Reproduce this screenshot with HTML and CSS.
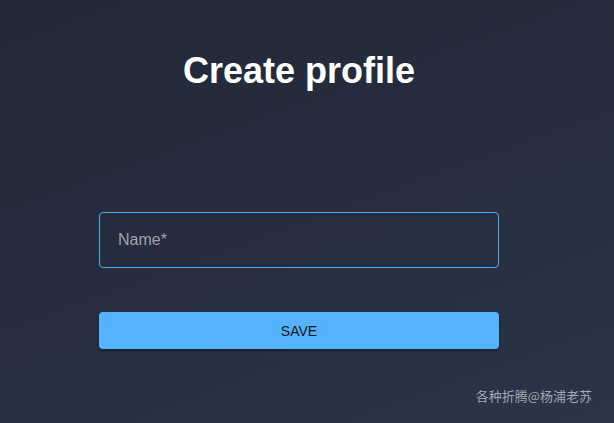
FILE: index.html
```html
<!DOCTYPE html>
<html lang="en">
<head>
<meta charset="utf-8">
<title>Create profile</title>
<link rel="stylesheet" href="styles.css">
</head>
<body>
<main class="page">
  <h1 class="title">Create profile</h1>
  <form class="form">
    <label class="field">
      <span class="field-label">Name*</span>
    </label>
    <button type="button" class="save">SAVE</button>
  </form>
</main>
<div class="watermark">各种折腾@杨浦老苏</div>
</body>
</html>
```
FILE: styles.css
```css
html, body {
  margin: 0;
  height: 100%;
}
body {
  background: linear-gradient(160deg, #222939 0%, #252d3e 50%, #2b3548 100%);
  font-family: "Liberation Sans", Arial, sans-serif;
  color: #fff;
  overflow: hidden;
  position: relative;
}
.page {
  display: flex;
  flex-direction: column;
  align-items: center;
  padding: 50px 16px 0 0;
}
.title {
  margin: 0;
  font-size: 36px;
  line-height: 42px;
  font-weight: 700;
  color: #fff;
}
.form {
  margin-top: 120px;
  width: 400px;
  display: flex;
  flex-direction: column;
  gap: 44px;
}
.field {
  box-sizing: border-box;
  height: 56px;
  border: 1px solid #4fa8f6;
  border-radius: 4px;
  display: flex;
  align-items: center;
  padding: 0 18px;
}
.field-label {
  font-size: 16px;
  color: #9ea2a9;
}
.save {
  height: 37px;
  border: none;
  border-radius: 4px;
  background: #55b2fe;
  color: #15191f;
  font-family: "Liberation Sans", Arial, sans-serif;
  font-size: 14px;
  box-shadow: 0 2px 3px rgba(0,0,0,0.3);
  cursor: pointer;
}
.watermark {
  position: absolute;
  right: 22px;
  bottom: 19px;
  font-family: "Noto Sans CJK SC", sans-serif;
  font-size: 13px;
  line-height: 16px;
  color: #a2a7b0;
}
```
